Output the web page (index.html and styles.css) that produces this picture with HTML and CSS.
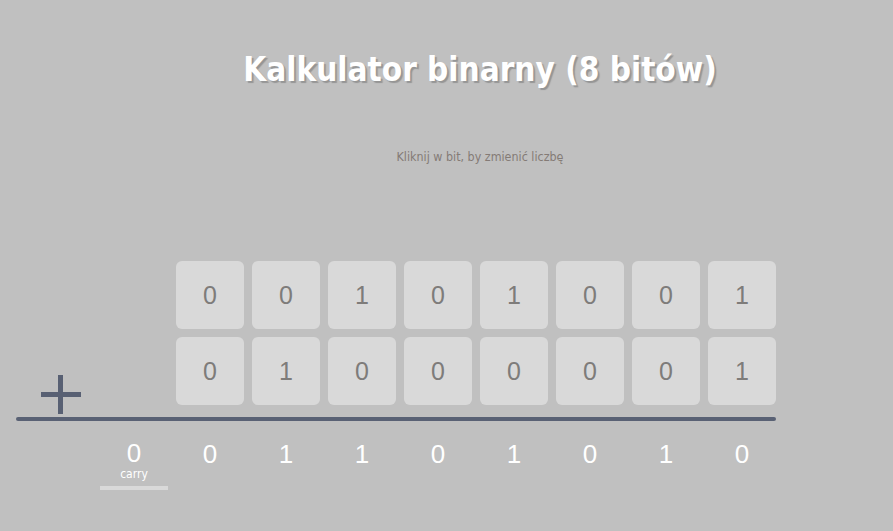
FILE: index.html
```html
<!DOCTYPE html>
<html lang="pl">
<head>
<meta charset="utf-8">
<title>Kalkulator binarny</title>
<link rel="stylesheet" href="styles.css">
</head>
<body>
<div class="page">
  <h1 class="title">Kalkulator binarny (8 bitów)</h1>
  <p class="hint">Kliknij w bit, by zmienić liczbę</p>
  <div class="calc">
    <div class="spacer"></div>
    <div class="spacer"></div>
    <button class="bit">0</button>
    <button class="bit">0</button>
    <button class="bit">1</button>
    <button class="bit">0</button>
    <button class="bit">1</button>
    <button class="bit">0</button>
    <button class="bit">0</button>
    <button class="bit">1</button>

    <div class="op">
      <svg class="plus" width="40" height="39" viewBox="0 0 40 39"><rect x="17" y="0" width="5" height="39" fill="#586073"/><rect x="0" y="17" width="40" height="5" fill="#586073"/></svg>
    </div>
    <div class="spacer"></div>
    <button class="bit">0</button>
    <button class="bit">1</button>
    <button class="bit">0</button>
    <button class="bit">0</button>
    <button class="bit">0</button>
    <button class="bit">0</button>
    <button class="bit">0</button>
    <button class="bit">1</button>

    <div class="rule"></div>

    <div class="spacer"></div>
    <div class="carry">
      <span class="res res-carry">0</span>
      <span class="carry-label">carry</span>
      <span class="carry-bar"></span>
    </div>
    <span class="res">0</span>
    <span class="res">1</span>
    <span class="res">1</span>
    <span class="res">0</span>
    <span class="res">1</span>
    <span class="res">0</span>
    <span class="res">1</span>
    <span class="res">0</span>
  </div>
</div>
</body>
</html>
```

FILE: styles.css
```css
html, body {
  margin: 0;
  padding: 0;
  background: #c0c0c0;
}
.page {
  width: 893px;
  height: 531px;
  overflow: hidden;
  font-family: "DejaVu Sans Condensed", "DejaVu Sans", sans-serif;
}
.title {
  margin: 0;
  padding-top: 48px;
  padding-left: 67px;
  text-align: center;
  font-family: "DejaVu Sans Condensed", "DejaVu Sans", sans-serif;
  font-weight: bold;
  font-size: 33px;
  line-height: 44px;
  color: #ffffff;
  text-shadow: 2px 2px 1px #959595;
}
.hint {
  margin: 57px 0 0 0;
  padding-left: 67px;
  text-align: center;
  font-size: 12.4px;
  line-height: 16px;
  color: #847b76;
}
.calc {
  margin: 96px 0 0 16px;
  width: 760px;
  display: grid;
  grid-template-columns: 76px 68px repeat(8, 68px);
  grid-auto-rows: auto;
  column-gap: 8px;
  row-gap: 8px;
}
.bit {
  width: 68px;
  height: 68px;
  padding: 0;
  border: none;
  border-radius: 6px;
  background: #d9d9d9;
  color: #7e7c7a;
  font-family: "Liberation Sans", Arial, sans-serif;
  font-size: 25px;
}
.op {
  display: flex;
  align-items: flex-end;
  padding-left: 25px;
  margin-bottom: -9px;
}
.rule {
  grid-column: 1 / -1;
  height: 4px;
  border-radius: 2px;
  background: #596174;
  margin-top: 4px;
}
.res {
  display: block;
  text-align: center;
  color: #ffffff;
  font-family: "Liberation Sans", Arial, sans-serif;
  font-size: 26px;
  line-height: 30px;
  margin-top: 10px;
}
.res-carry {
  line-height: 27px;
  margin-top: 11px;
}
.carry {
  display: flex;
  flex-direction: column;
  align-items: stretch;
}
.carry-label {
  display: block;
  text-align: center;
  color: #ffffff;
  font-size: 12px;
  line-height: 12px;
  margin-top: 1px;
}
.carry-bar {
  display: block;
  height: 4px;
  background: #d9d9d9;
  margin-top: 6px;
}
```
